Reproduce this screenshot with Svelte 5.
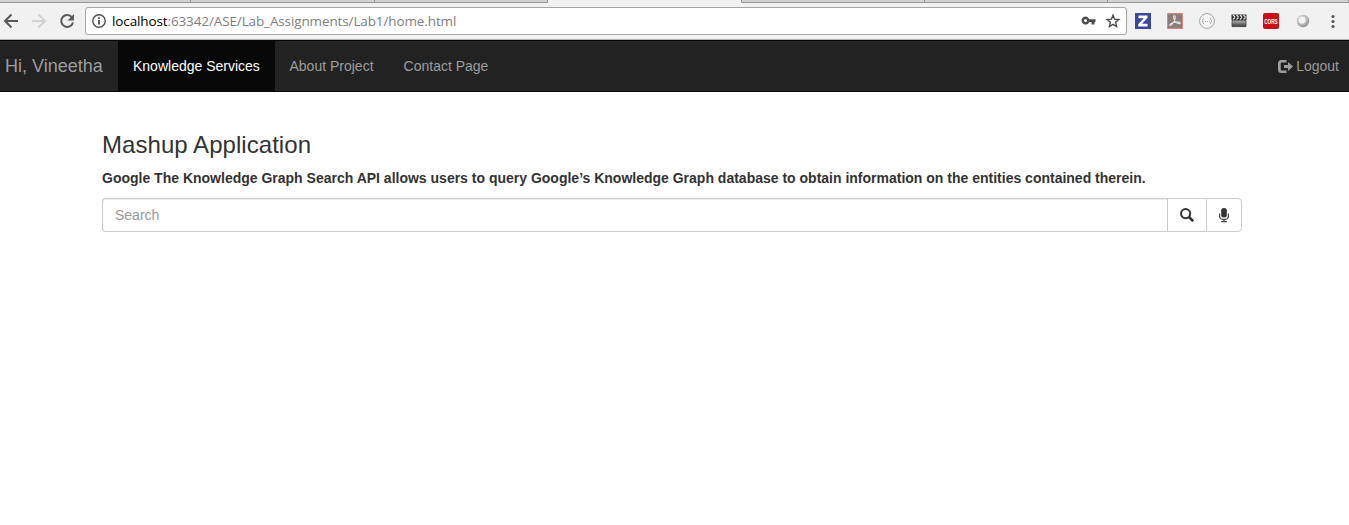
<script>
  const navItems = ['Knowledge Services', 'About Project', 'Contact Page'];
  const tabs = [191, 184, 173, 194, 183, 183, 241];
  const activeTab = 3;
  let query = $state('');
</script>

<div class="browser">
  <div class="tabs">
    {#each tabs as width, i}
      <div class="tab" class:selected={i === activeTab} style:width="{width}px"></div>
    {/each}
  </div>
  <div class="toolbar">
    <div class="history">
      <svg width="82" height="26" viewBox="0 0 82 26" fill="none" stroke-width="2">
        <path d="M19 13H6.500M12.500 6.500L6 13l6.500 6.500" stroke="#5a5a5a" />
        <path d="M33 13h12.500M39.500 6.500L46 13l-6.500 6.500" stroke="#d2d2d2" />
        <path d="M73 9.300A6 6 0 1 0 74 14.500" stroke="#5a5a5a" />
        <path d="M75 6v6.500h-6.500z" fill="#5a5a5a" />
      </svg>
    </div>
    <div class="address">
      <svg class="info" width="14" height="14" viewBox="0 0 14 14">
        <circle cx="7" cy="7" r="6.200" fill="none" stroke="#505050" stroke-width="1.400" />
        <path d="M6.100 6h1.800v4.500H6.100zM6.100 3.200h1.800v1.700H6.100z" fill="#505050" />
      </svg>
      <span class="url"><b>localhost</b>:63342/ASE/Lab_Assignments/Lab1/home.html</span>
      <svg class="key" width="15" height="10" viewBox="0 0 15 10">
        <path fill-rule="evenodd" fill="#4d4d4d" d="M4.500.5a4 4 0 0 1 3.800 2.700h6.200V6H13.500v2.500h-2.900V6H8.300A4 4 0 1 1 4.500.5zm0 2.600a1.500 1.500 0 1 0 0 3 1.500 1.500 0 0 0 0-3z" />
      </svg>
      <svg class="star" width="16" height="16" viewBox="0 0 16 16">
        <path d="M8 2.200l1.600 4 4.300.3-3.300 2.800 1 4.200L8 11.300l-3.600 2.200 1-4.200-3.300-2.800 4.300-.3z" fill="none" stroke="#4d4d4d" stroke-width="1.400" />
      </svg>
    </div>
    <div class="extensions">
      <svg width="16" height="16" viewBox="0 0 16 16">
        <path fill="#3b489d" d="M0 0h16v16H0z" />
        <path fill="#fff" d="M3.500 2.500h9v2.300l-5.400 6h5.400v2.700H3.200v-2.300l5.600-6H3.500z" />
      </svg>
      <svg width="16" height="16" viewBox="0 0 16 16">
        <path fill="#8c7d7c" stroke="#e0827d" d="M.5.5h15v15H.5z" />
        <path d="M7.200 2.800c2-.4 1 4.200-.7 6.500-1.300 2-3.500 4-3.700 2.800-.2-1.500 4.500-3.300 8-3.100 2.700.1 3 1.800 1.300 1.800C9.800 10.800 6.500 7 6.600 3.800c0-.5.200-.9.600-1z" fill="none" stroke="#ece8e8" stroke-width="1.100" />
      </svg>
      <svg width="16" height="16" viewBox="0 0 16 16" fill="none" stroke="#a2a2a2">
        <circle cx="8" cy="8" r="7.400" fill="#f8f8f8" />
        <path d="M5 5C3.500 5 4.700 7.500 3.200 8 4.700 8.500 3.500 11 5 11M11 5c1.500 0 .3 2.500 1.800 3-1.500.5-.3 3-1.800 3" />
        <path d="M6 8.500h1M8 8.500h1M10 8.500h.700" />
      </svg>
      <svg width="16" height="16" viewBox="0 0 16 16">
        <defs>
          <linearGradient id="slate" x2="0" y2="1"><stop stop-color="#b6b6b6" /><stop offset="1" stop-color="#3a3a3a" /></linearGradient>
        </defs>
        <path fill="#303030" d="M.5 1.500h15V7H.5z" />
        <path d="M2 2l2 2M5.500 2l2 2M9 2l2 2M12.500 2l2 2M4 4.500l-2 2M7.500 4.500l-2 2M11 4.500l-2 2M14.500 4.500l-2 2" stroke="#e5e5e5" stroke-width="1.200" />
        <path fill="url(#slate)" stroke="#444" stroke-width=".8" d="M1 7.400h14v6.200H1z" />
      </svg>
      <svg width="16" height="16" viewBox="0 0 16 16">
        <rect width="16" height="16" rx="2" fill="#cc0f16" />
        <text transform="translate(1.200 10.800) scale(.58 1)" fill="#fff" font-family="Liberation Sans, sans-serif" font-weight="bold" font-size="8">CORS</text>
      </svg>
      <svg width="16" height="16" viewBox="0 0 16 16">
        <defs>
          <radialGradient id="orb" cx=".4" cy=".35" r=".65"><stop stop-color="#e8e8e8" /><stop offset=".55" stop-color="#c4c4c4" /><stop offset="1" stop-color="#8e8e8e" /></radialGradient>
        </defs>
        <circle cx="8" cy="8" r="6.200" fill="url(#orb)" />
        <circle cx="7" cy="7.200" r="3.400" fill="#f2f2f2" />
      </svg>
      <svg class="menu" width="4" height="16" viewBox="0 0 4 16" fill="#555">
        <circle cx="2" cy="3.500" r="1.600" /><circle cx="2" cy="8.500" r="1.600" /><circle cx="2" cy="13.500" r="1.600" />
      </svg>
    </div>
  </div>
</div>

<nav>
  <a class="brand" href="#home">Hi, Vineetha</a>
  {#each navItems as item, i}
    <a class="item" class:active={i === 0} href="#nav{i}">{item}</a>
  {/each}
  <a class="logout" href="#logout">
    <svg width="15" height="13" viewBox="0 0 15 13" fill="currentColor">
      <path d="M8.500 0v2.500H4Q2.700 2.500 2.700 3.800v5.400Q2.700 10.500 4 10.500h4.500V13H3.500Q0 13 0 9.500v-6Q0 0 3.500 0z" />
      <path d="M10 2l5 4.500-5 4.500V8H6V5h4z" />
    </svg>
    Logout
  </a>
</nav>

<main>
  <h3>Mashup Application</h3>
  <label for="query">Google The Knowledge Graph Search API allows users to query Google’s Knowledge Graph database to obtain information on the entities contained therein.</label>
  <div class="search">
    <input id="query" placeholder="Search" bind:value={query} />
    <button class="find" aria-label="Search">
      <svg width="14" height="14" viewBox="0 0 14 14" fill="none" stroke="#333">
        <circle cx="5.600" cy="5.600" r="4.600" stroke-width="2" />
        <path d="M9 9l4.200 4.200" stroke-width="2.600" />
      </svg>
    </button>
    <button class="voice" aria-label="Voice search">
      <svg width="10" height="15" viewBox="0 0 10 15">
        <rect x="2.200" y="0" width="5.600" height="9.600" rx="2.500" fill="#333" />
        <path d="M.6 5.500v2.800c0 4.200 8.800 4.200 8.800 0V5.500M5 11.500v2.300M2.200 13.600h5.600" fill="none" stroke="#444" stroke-width="1.200" />
      </svg>
    </button>
  </div>
</main>

<style>
  :global(body) {
    margin: 0;
    background: #fff;
    font: 14px/20px 'Liberation Sans', Arial, sans-serif;
    color: #333;
    overflow: hidden;
  }
  * { box-sizing: border-box; }
  svg { display: block; flex: none; }
  a { text-decoration: none; color: #9d9d9d; }

  .browser { height: 40px; background: #f1f1f1; border-bottom: 1px solid #b5b5b5; }
  .tabs { display: flex; height: 3px; }
  .tab {
    flex: none;
    background: #d1d1d1;
    border-right: 1px solid #999;
    border-bottom: 1px solid #999;
  }
  .tab.selected { background: #f1f1f1; border-bottom-color: #f1f1f1; }
  .toolbar { display: flex; height: 36px; padding-top: 4px; }
  .history { width: 85px; padding-top: 1px; }
  .history svg { margin-left: -1px; }
  .address {
    display: flex;
    align-items: center;
    width: 1042px;
    height: 28px;
    padding: 0 5px 0 6px;
    background: #fff;
    border: 1px solid #a6a6a6;
    border-radius: 3px;
  }
  .url {
    margin-left: 6px;
    font: 13.5px/20px 'Open Sans', 'Noto Sans', sans-serif;
    color: #808080;
    white-space: nowrap;
    letter-spacing: -0.12px;
  }
  .url b { font-weight: 400; color: #000; }
  .key { margin-left: auto; }
  .star { margin-left: 9px; }
  .extensions { display: flex; gap: 16px; padding: 6px 0 0 8px; }
  .menu { margin-left: 4px; }

  nav {
    display: flex;
    height: 52px;
    padding-right: 10px;
    background: #222;
    border: solid #080808;
    border-width: 1px 0;
  }
  nav a { line-height: 50px; white-space: nowrap; }
  .brand { width: 118px; padding-left: 5px; font-size: 18px; }
  .item { padding: 0 15px; }
  .item.active { width: 156.5px; background: #080808; color: #fff; }
  .logout { display: flex; align-items: center; gap: 3px; margin-left: auto; }

  main { width: 1140px; margin: 40px 0 0 102px; }
  h3 { margin: 0; font-size: 24px; line-height: 26px; font-weight: 500; letter-spacing: 0.05px; }
  label { display: block; margin: 10px 0; font-weight: 700; white-space: nowrap; }
  .search { display: flex; height: 34px; }
  input {
    width: 1065px;
    padding: 6px 12px;
    border: 1px solid #ccc;
    border-right: 0;
    border-radius: 4px 0 0 4px;
    box-shadow: inset 0 1px 1px rgba(0, 0, 0, 0.075);
    font: inherit;
    outline: 0;
  }
  input::placeholder { color: #999; opacity: 1; }
  button {
    display: flex;
    justify-content: center;
    align-items: center;
    padding: 0;
    border: 1px solid #ccc;
    background: #fff;
  }
  .find { width: 39px; padding-bottom: 1px; border-right: 0; }
  .voice { width: 36px; padding-right: 1px; border-radius: 0 4px 4px 0; }
</style>
